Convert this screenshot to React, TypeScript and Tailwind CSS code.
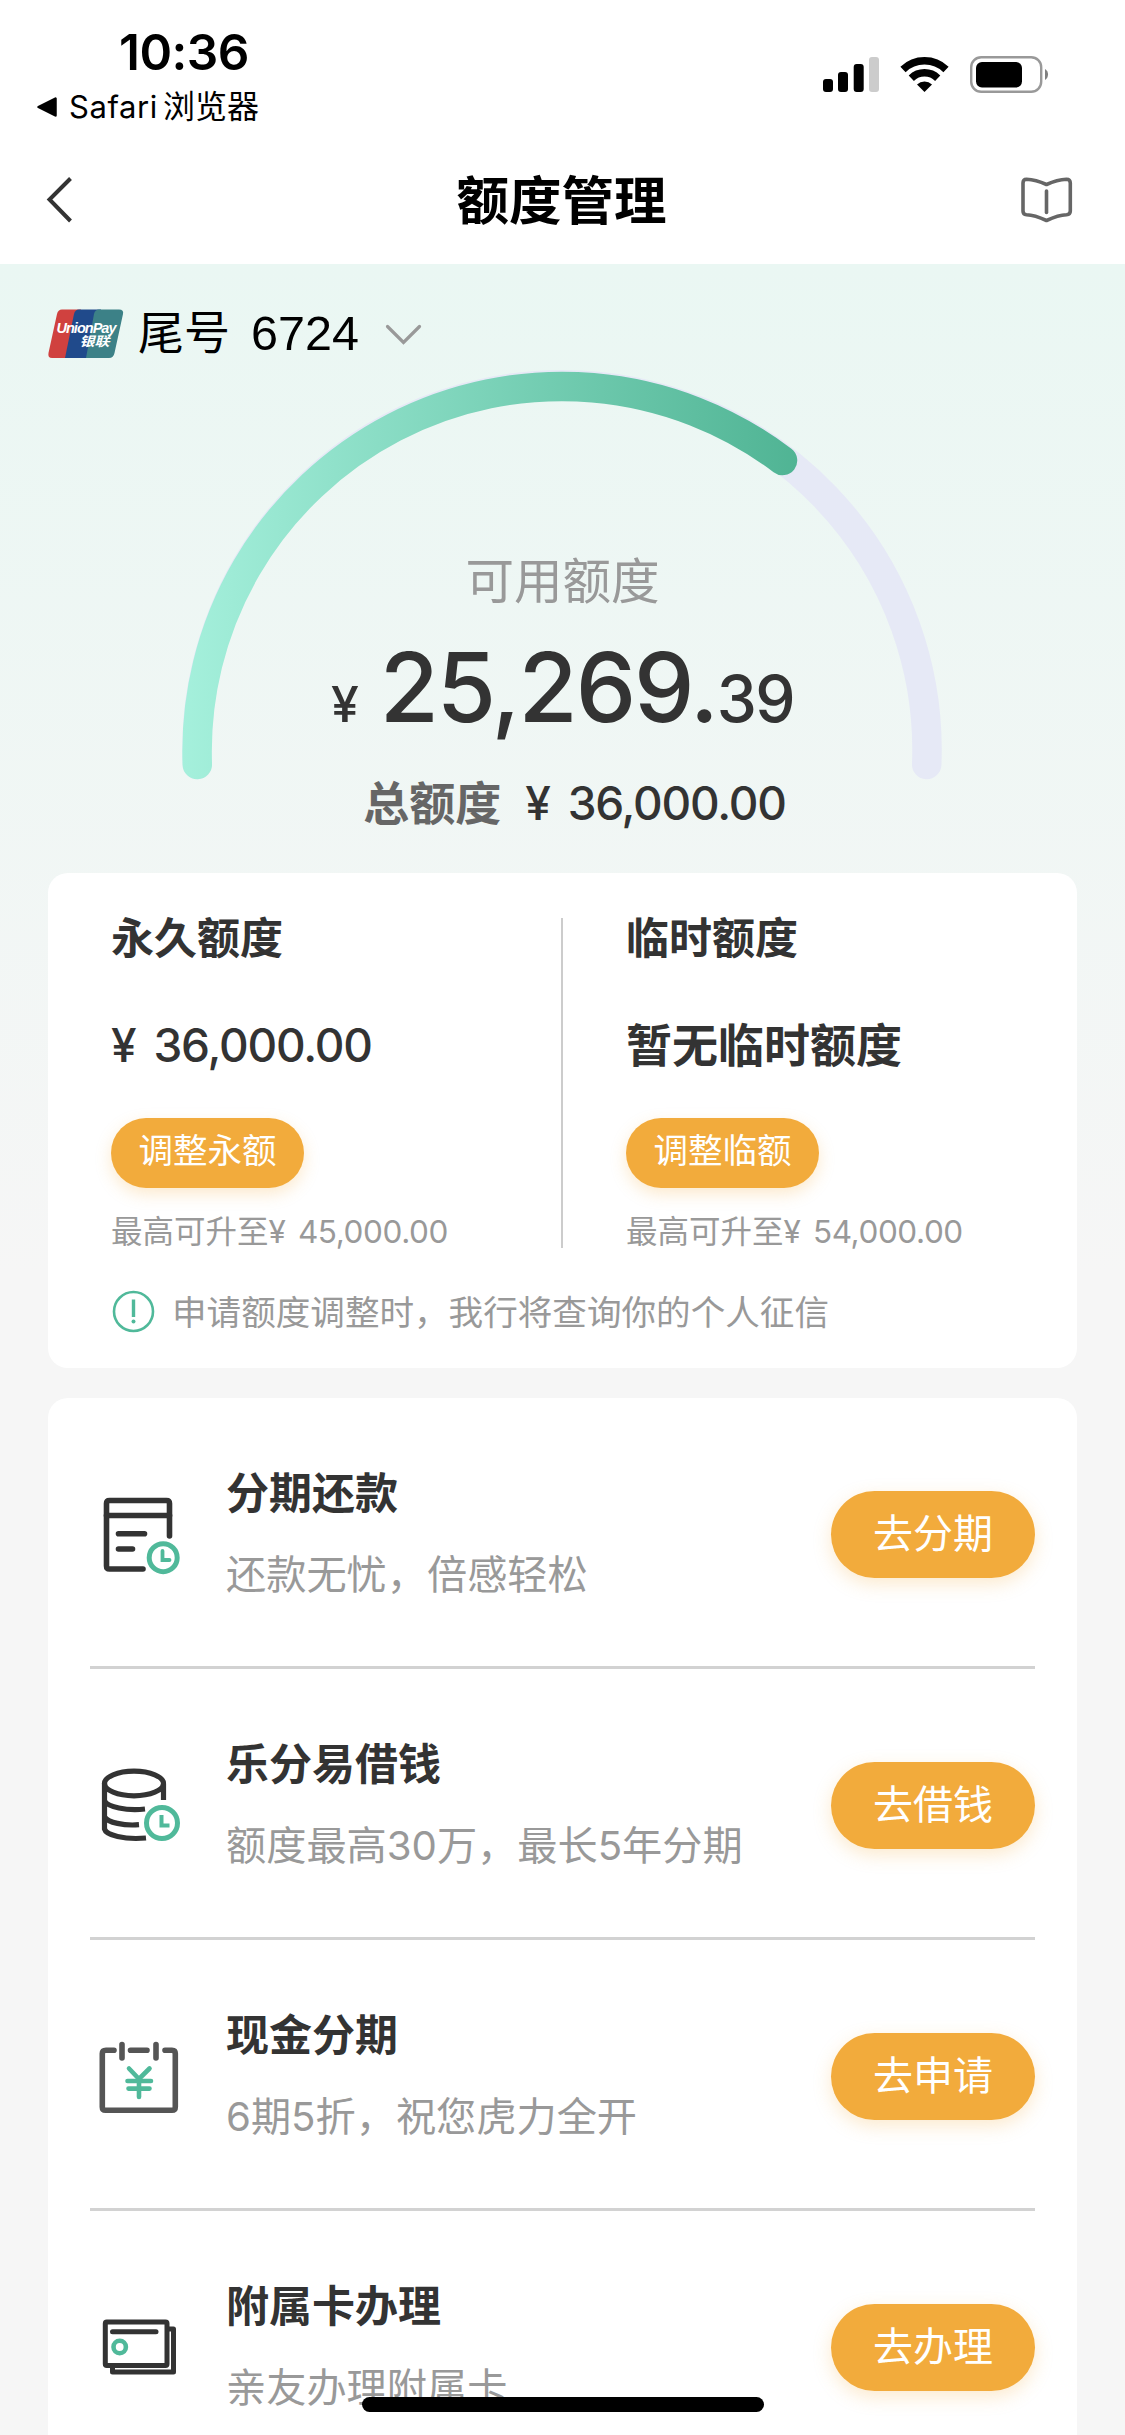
import { ReactNode } from "react";

interface QuotaColumnProps {
    title: string;
    value: ReactNode;
    action: string;
    max: string;
}

interface ServiceItem {
    title: string;
    description: string;
    action: string;
    icon: ReactNode;
}

const StatusBar = () => {
    return (
        <div className="flex justify-between h-[136px] text-black">
            <div className="pl-[36px] pt-[22px]">
                <div className="pl-[83px] h-[60px] text-[49.5px] leading-[61px] font-semibold tracking-[-0.5px]">
                    10:36
                </div>
                <div className="flex items-center h-[50px]">
                    <svg width="22" height="22" viewBox="0 0 22 22">
                        <path
                            d="M2.5 11 L19.5 2.5 V19.5 Z"
                            fill="#000"
                            stroke="#000"
                            strokeWidth="2.5"
                            strokeLinejoin="round"
                        />
                    </svg>
                    <span className="pl-[11px] text-[31px] leading-[50px] tracking-[0.6px]">
                        Safari
                    </span>
                    <span className="pl-[5px] text-[32px] leading-[50px]">
                        浏览器
                    </span>
                </div>
            </div>
            <div className="flex items-start pt-[56px] pr-[75px]">
                <svg width="57" height="37" viewBox="822 56 57 37">
                    <rect x="823" y="79" width="10" height="13" rx="3" />
                    <rect x="838" y="72" width="10" height="20" rx="3" />
                    <rect x="853.7" y="64" width="10" height="28" rx="3" />
                    <rect
                        x="869"
                        y="57"
                        width="10"
                        height="35"
                        rx="3"
                        fill="#cccccc"
                    />
                </svg>
                <svg
                    className="ml-[21px]"
                    width="49"
                    height="37"
                    viewBox="900 56 49 37"
                >
                    <g fill="none" stroke="#000">
                        <path
                            d="M903 69.5 A31 31 0 0 1 946 69.5"
                            strokeWidth="7.5"
                        />
                        <path
                            d="M911.3 78.2 A19 19 0 0 1 937.7 78.2"
                            strokeWidth="7.5"
                        />
                    </g>
                    <path d="M924.5 92 L917 84.5 A10.8 10.8 0 0 1 932 84.5 Z" />
                </svg>
                <svg
                    className="ml-[21px]"
                    width="80"
                    height="37"
                    viewBox="970 56 80 37"
                >
                    <rect
                        x="971.2"
                        y="57.2"
                        width="70"
                        height="34.6"
                        rx="10"
                        fill="none"
                        stroke="#999"
                        strokeWidth="2.4"
                    />
                    <rect x="976" y="62" width="46" height="25.5" rx="6" />
                    <path
                        d="M1045 69 A6.5 6.5 0 0 1 1045 80 Z"
                        fill="#808080"
                    />
                </svg>
            </div>
        </div>
    );
};

const NavBar = () => {
    return (
        <div className="flex justify-between items-center h-[128px] pl-[44px] pr-[50px]">
            <svg width="56" height="50" viewBox="44 175 56 50">
                <path
                    d="M70.5 178.5 L49.5 199.5 L70.5 221"
                    fill="none"
                    stroke="#333"
                    strokeWidth="4"
                />
            </svg>
            <div className="pl-[4px] pt-[2px] text-[52.5px] leading-[60px] font-bold text-black">
                额度管理
            </div>
            <svg width="56" height="50" viewBox="1019 175 56 50">
                <g
                    fill="none"
                    stroke="#666"
                    strokeWidth="3.6"
                    strokeLinecap="round"
                    strokeLinejoin="round"
                >
                    <path d="M1026.5 179.2 C1034 179.5 1040 181.5 1046.5 184.5 C1053 181.5 1059 179.5 1066.5 179.2 Q1070.3 179.2 1070.3 183 V211 Q1070.3 214.5 1066.5 214.8 C1059 215 1053 217.5 1046.5 220.5 C1040 217.5 1034 215 1026.5 214.8 Q1023 214.5 1023 211 V183 Q1023 179.2 1026.5 179.2 Z" />
                    <path d="M1046.5 191 V212.5" />
                </g>
            </svg>
        </div>
    );
};

const UnionPayLogo = () => {
    return (
        <svg
            className="overflow-visible"
            width="76"
            height="50"
            viewBox="0 0 76 50"
        >
            <path
                d="M14 0.5 H33 L22 49 H4 Q-0.5 49 0.5 44 L9 5 Q10 0.5 14 0.5 Z"
                fill="#d0413f"
            />
            <path
                d="M31 0.5 H53 L42 49 H17 L26 5 Q27 0.5 31 0.5 Z"
                fill="#204a8b"
            />
            <path
                d="M51 0.5 H71 Q76 0.5 75 5 L66.5 44 Q65.5 49 61 49 H38 L46 5 Q47 0.5 51 0.5 Z"
                fill="#3c8187"
            />
            <text
                x="8.5"
                y="23.5"
                fill="#fff"
                fontFamily="Liberation Sans, sans-serif"
                fontSize="14.5"
                fontWeight="700"
                fontStyle="italic"
                textLength="60"
                lengthAdjust="spacing"
            >
                UnionPay
            </text>
            <text
                x="31.5"
                y="37"
                fill="#fff"
                fontFamily="Noto Sans CJK SC, sans-serif"
                fontSize="13"
                fontWeight="700"
                fontStyle="italic"
                textLength="30"
                lengthAdjust="spacingAndGlyphs"
            >
                银联
            </text>
        </svg>
    );
};

const CardSelector = () => {
    return (
        <div className="flex items-center h-[138px] pl-[48px] pt-[1px]">
            <UnionPayLogo />
            <span className="pl-[14px] -mt-[3px] text-[46px] leading-[60px] text-black">
                尾号
            </span>
            <span className="pl-[21px] -mt-[2px] font-['Liberation_Sans',sans-serif] text-[48.5px] leading-[60px] text-black">
                6724
            </span>
            <svg
                className="ml-[26px] mt-[2px]"
                width="37"
                height="22"
                viewBox="0 0 37 22"
            >
                <path
                    d="M2.5 2.5 L18.5 18.5 L34.5 2.5"
                    fill="none"
                    stroke="#999"
                    strokeWidth="3.2"
                    strokeLinecap="round"
                />
            </svg>
        </div>
    );
};

const QuotaGauge = () => {
    return (
        <div className="relative h-[471px]">
            <svg
                className="absolute left-[180px] -top-[34px]"
                width="764"
                height="414"
                viewBox="180 368 764 414"
            >
                <defs>
                    <linearGradient
                        id="gauge"
                        gradientUnits="userSpaceOnUse"
                        x1="182"
                        y1="0"
                        x2="797"
                        y2="0"
                    >
                        <stop offset="0" stopColor="#a5f0dc" />
                        <stop offset="1" stopColor="#50b494" />
                    </linearGradient>
                </defs>
                <g fill="none" strokeWidth="29.5" strokeLinecap="round">
                    <path
                        d="M197.3 764.5 A365 365 0 1 1 926.7 764.5"
                        stroke="#e6e9f6"
                    />
                    <path
                        d="M197.3 764.5 A365 365 0 0 1 782.5 460.5"
                        stroke="url(#gauge)"
                    />
                </g>
            </svg>
            <div className="relative flex flex-col items-center pt-[150px]">
                <div className="text-[48.5px] leading-[60px] text-[#999]">
                    可用额度
                </div>
                <div className="flex items-baseline h-[120px] mt-[25px] leading-[100px] font-medium text-[#333]">
                    <span className="text-[50px]">¥</span>
                    <span className="pl-[21px] text-[96px] tracking-[-2.1px]">
                        25,269.
                    </span>
                    <span className="text-[64px] tracking-[-1.6px]">39</span>
                </div>
                <div className="flex items-baseline pl-[24px] mt-[16px] text-[46px] leading-[60px]">
                    <span className="font-bold text-[#666]">总额度</span>
                    <span className="pl-[24px] font-medium text-[#333] tracking-[-1.2px] [word-spacing:7px]">
                        ¥ 36,000.00
                    </span>
                </div>
            </div>
        </div>
    );
};

const QuotaColumn = ({ title, value, action, max }: QuotaColumnProps) => {
    return (
        <div className="flex flex-col items-start w-[514px] pl-[63px]">
            <div className="text-[43px] leading-[60px] font-bold text-[#333]">
                {title}
            </div>
            <div className="mt-[47px] text-[46px] leading-[60px] text-[#333]">
                {value}
            </div>
            <button className="mt-[43px] w-[193px] h-[70px] pb-[4px] rounded-full bg-[#f2ab3c] text-[34.5px] text-white shadow-[0_6px_16px_rgba(242,171,60,0.25)]">
                {action}
            </button>
            <div className="mt-[24px] text-[31.5px] leading-[40px] text-[#999]">
                最高可升至
                <span className="tracking-[-0.4px] [word-spacing:4px]">
                    {max}
                </span>
            </div>
        </div>
    );
};

const QuotaCard = () => {
    return (
        <div className="mx-[48px] h-[495px] rounded-[20px] bg-white">
            <div className="flex pt-[35px] h-[387px]">
                <QuotaColumn
                    title="永久额度"
                    value={
                        <span className="font-medium tracking-[-1.2px] [word-spacing:7px]">
                            ¥ 36,000.00
                        </span>
                    }
                    action="调整永额"
                    max="¥ 45,000.00"
                />
                <div className="w-[2px] h-[330px] mt-[10px] -ml-[1px] bg-[#ccc]" />
                <QuotaColumn
                    title="临时额度"
                    value={<span className="font-bold">暂无临时额度</span>}
                    action="调整临额"
                    max="¥ 54,000.00"
                />
            </div>
            <div className="flex items-center h-[103px] pl-[64px]">
                <svg width="43" height="43" viewBox="0 0 43 43">
                    <circle
                        cx="21.5"
                        cy="21.5"
                        r="19.5"
                        fill="none"
                        stroke="#50b99a"
                        strokeWidth="2.6"
                    />
                    <path d="M21.5 9.5 V27" stroke="#50b99a" strokeWidth="3.4" />
                    <circle cx="21.5" cy="31.5" r="2" fill="#50b99a" />
                </svg>
                <span className="pl-[17px] text-[34.6px] leading-[50px] text-[#999]">
                    申请额度调整时，我行将查询你的个人征信
                </span>
            </div>
        </div>
    );
};

const InstallmentIcon = () => {
    return (
        <svg width="84" height="84" viewBox="98 1492 84 84" fill="none">
            <g
                stroke="#333"
                strokeWidth="5.6"
                strokeLinecap="round"
                strokeLinejoin="round"
            >
                <path d="M169.5 1536 V1503.5 Q169.5 1500.5 166.5 1500.5 H109.5 Q106.5 1500.5 106.5 1503.5 V1566 Q106.5 1569 109.5 1569 H143" />
                <path d="M106.5 1515.5 H169.5" />
                <path d="M118.5 1533.7 H144.5 M118.5 1549 H132.5" />
            </g>
            <g stroke="#50b99a">
                <circle cx="163.2" cy="1557.7" r="14" strokeWidth="5" />
                <path
                    d="M162.5 1551 V1560 H169.5"
                    strokeWidth="3.8"
                    strokeLinecap="round"
                />
            </g>
        </svg>
    );
};

const LoanIcon = () => {
    return (
        <svg width="84" height="84" viewBox="98 1763 84 84" fill="none">
            <g stroke="#333" strokeWidth="5.2">
                <ellipse cx="134" cy="1783.5" rx="29.5" ry="12.3" />
                <path d="M104.5 1783 V1829 C106 1835 124 1840 146 1838" />
                <path d="M163.5 1784 V1800" />
                <path d="M104.5 1801 C108 1807 126 1811 145 1809" />
                <path d="M104.5 1817 C108 1822.5 124 1826 139 1824.7" />
            </g>
            <g stroke="#50b99a">
                <circle cx="162" cy="1823" r="15.5" strokeWidth="5" />
                <path
                    d="M161.5 1815 V1825.5 H169.5"
                    strokeWidth="4"
                />
            </g>
        </svg>
    );
};

const CashIcon = () => {
    return (
        <svg width="84" height="84" viewBox="98 2034 84 84" fill="none">
            <g
                stroke="#555"
                strokeWidth="5.6"
                strokeLinecap="round"
                strokeLinejoin="round"
            >
                <path d="M114 2050.3 H106 Q102.3 2050.3 102.3 2053.5 V2107 Q102.3 2110.3 105.5 2110.3 H172 Q175.3 2110.3 175.3 2107 V2053.5 Q175.3 2050.3 172 2050.3 H165" />
                <path d="M130.5 2050.3 H147 M122 2044.5 V2058 M156 2044.5 V2058" />
            </g>
            <g stroke="#50b99a" strokeWidth="4.6" strokeLinecap="round">
                <path d="M129 2068.5 L139 2079 L149.5 2068.5 M139 2079 V2097" />
                <path d="M127.5 2081 H151 M128.5 2088.6 H149.5" />
            </g>
        </svg>
    );
};

const SupplementaryCardIcon = () => {
    return (
        <svg width="84" height="84" viewBox="98 2305 84 84" fill="none">
            <g stroke="#333" strokeWidth="5" strokeLinejoin="round">
                <rect x="105.3" y="2322" width="61.7" height="43.5" rx="1.5" />
                <path d="M112.5 2365.5 V2372 H173.5 V2329 H167.5" />
                <path d="M112.5 2331.8 H156" strokeLinecap="round" />
            </g>
            <circle
                cx="119.7"
                cy="2347"
                r="6.2"
                stroke="#50b99a"
                strokeWidth="4.6"
            />
        </svg>
    );
};

const services: ServiceItem[] = [
    {
        title: "分期还款",
        description: "还款无忧，倍感轻松",
        action: "去分期",
        icon: <InstallmentIcon />,
    },
    {
        title: "乐分易借钱",
        description: "额度最高30万，最长5年分期",
        action: "去借钱",
        icon: <LoanIcon />,
    },
    {
        title: "现金分期",
        description: "6期5折，祝您虎力全开",
        action: "去申请",
        icon: <CashIcon />,
    },
    {
        title: "附属卡办理",
        description: "亲友办理附属卡",
        action: "去办理",
        icon: <SupplementaryCardIcon />,
    },
];

const ServiceRow = ({ title, description, action, icon }: ServiceItem) => {
    return (
        <div className="flex items-center h-[271px] pt-[4px] pl-[8px] border-b-[3px] border-[#d2d2d2] last:border-transparent">
            {icon}
            <div className="grow pl-[44px]">
                <div className="text-[43px] leading-[60px] font-bold text-[#333]">
                    {title}
                </div>
                <div className="mt-[22px] text-[40.2px] leading-[60px] text-[#999]">
                    {description}
                </div>
            </div>
            <button className="w-[204px] h-[87px] pb-[1px] rounded-full bg-[#f2ab3c] text-[40px] text-white shadow-[0_6px_18px_rgba(242,171,60,0.25)]">
                {action}
            </button>
        </div>
    );
};

const App = () => {
    return (
        <div className="relative w-[1125px] h-[2435px] overflow-hidden bg-white font-['Inter','Noto_Sans_CJK_SC',sans-serif]">
            <StatusBar />
            <NavBar />
            <main className="h-[2171px] bg-[linear-gradient(180deg,#eaf7f3_0px,#f6f6f6_1010px)]">
                <CardSelector />
                <QuotaGauge />
                <QuotaCard />
                <div className="mx-[48px] mt-[30px] px-[42px] rounded-t-[20px] bg-white">
                    {services.map((item) => (
                        <ServiceRow key={item.title} {...item} />
                    ))}
                </div>
            </main>
            <div className="absolute left-[362px] bottom-[23px] w-[402px] h-[15px] rounded-full bg-black" />
        </div>
    );
};

export default App;
